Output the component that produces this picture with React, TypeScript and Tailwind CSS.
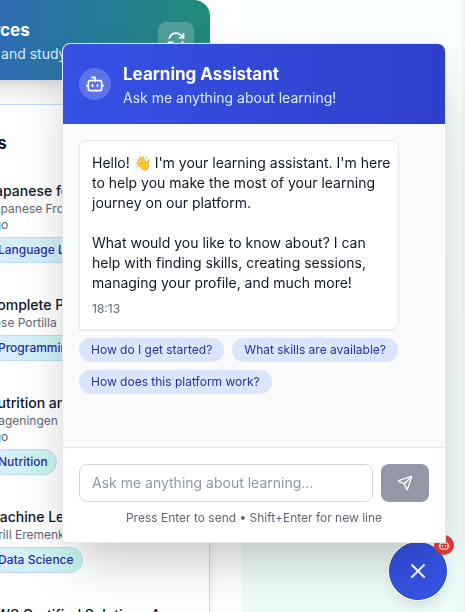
import { Bot, Send, X } from "lucide-react";
import { HiOutlineArrowPath } from "react-icons/hi2";

const courses = [
  { title: "Japanese for Beginners", by: ["Japanese From Zero", "ago"], tag: "Language Learning" },
  { title: "Complete Python", by: ["Jose Portilla"], tag: "Programming" },
  { title: "Nutrition and Health", by: ["Wageningen", "ago"], tag: "Nutrition" },
  { title: "Machine Learning", by: ["Kirill Eremenko"], tag: "Data Science" },
  { title: "AWS Certified Solutions Arc", by: [], tag: "" },
];

const prompts = ["How do I get started?", "What skills are available?", "How does this platform work?"];

function ResourcePage() {
  return (
    <div className="flex h-screen gap-8 overflow-hidden">
      <main className="-ml-24 w-[306px] shrink-0">
        <header className="flex h-20 items-center justify-between rounded-tr-2xl bg-linear-to-r/srgb from-[#325fd0] to-[#218c78] px-4 shadow-xl">
          <div className="pt-1 pl-[22px] whitespace-nowrap text-white">
            <h1 className="text-[17px] leading-6 font-bold">Resources</h1>
            <p className="text-sm leading-6 text-blue-100">Courses and study</p>
          </div>
          <button aria-label="Refresh" className="flex size-9 items-center justify-center rounded-lg bg-white/20 text-white">
            <HiOutlineArrowPath size={20} strokeWidth={2} />
          </button>
        </header>
        <section className="mt-6 h-[600px] rounded-tr-2xl border border-blue-200 bg-white pt-6 pl-[22px] shadow-lg">
          <h2 className="pl-2.5 text-[17px] leading-7 font-bold text-gray-900">Courses</h2>
          <ul className="mt-6 flex flex-col gap-8 pl-15 whitespace-nowrap">
            {courses.map((c) => (
              <li key={c.title}>
                <h3 className="text-sm leading-5 font-medium text-gray-900">{c.title}</h3>
                {c.by.map((line) => (
                  <p key={line} className="text-xs leading-4 text-[#5f6675]">{line}</p>
                ))}
                {c.tag && (
                  <span className="mt-1 ml-0.5 inline-block rounded-full border border-blue-200 bg-linear-to-r from-blue-100 to-[#c6f7ec] px-2 py-1 text-xs font-medium text-[#2a2fa3]">
                    {c.tag}
                  </span>
                )}
              </li>
            ))}
          </ul>
        </section>
      </main>
      <aside className="flex-1 border-r-3 border-slate-100 bg-linear-to-b from-[#fafffd] to-[#edfcf8]" />
    </div>
  );
}

function ChatPanel() {
  return (
    <section aria-label="Learning Assistant" className="fixed right-[19px] bottom-[69px] z-20 flex h-[500px] w-96 flex-col overflow-hidden rounded-t-lg border border-gray-200 bg-white shadow-2xl">
      <header className="flex h-20 shrink-0 items-center gap-3 bg-linear-to-r from-[#3552e5] to-[#2f3fcb] px-4 text-white">
        <div className="flex size-8 items-center justify-center rounded-full bg-white/20">
          <Bot size={20} />
        </div>
        <div>
          <h2 className="text-[17px] leading-7 font-bold">Learning Assistant</h2>
          <p className="text-sm leading-5 text-blue-100">Ask me anything about learning!</p>
        </div>
      </header>
      <div className="flex-1 bg-gray-50 p-4">
        <div className="w-80 rounded-lg rounded-bl-none border border-gray-200 bg-white py-3 pr-1 pl-3 shadow-xs">
          <p className="text-sm leading-5 text-gray-900">
            Hello! 👋 I'm your learning assistant. I'm here to help you make the most of your learning journey on our platform.
          </p>
          <p className="mt-5 text-sm leading-5 text-gray-900">
            What would you like to know about? I can help with finding skills, creating sessions, managing your profile, and much more!
          </p>
          <time className="mt-2 block text-xs leading-4 text-[#5f6675]">18:13</time>
        </div>
        <div className="mt-2 flex flex-wrap gap-2">
          {prompts.map((p) => (
            <button key={p} className="rounded-full bg-[#d9e6fd] px-3 py-1 text-xs leading-4 text-[#2a2fa3]">{p}</button>
          ))}
        </div>
      </div>
      <form className="border-t border-gray-200 p-4" onSubmit={(e) => e.preventDefault()}>
        <div className="flex gap-2">
          <input aria-label="Message" placeholder="Ask me anything about learning..." className="min-w-0 flex-1 rounded-lg border border-gray-300 px-3 py-2 text-sm leading-5 placeholder:text-[#9097a5]" />
          <button aria-label="Send message" className="flex w-12 items-center justify-center rounded-lg bg-[#9298a6] text-white">
            <Send size={16} />
          </button>
        </div>
        <p className="mt-2 text-center text-xs leading-4 text-[#5f6675]">Press Enter to send • Shift+Enter for new line</p>
      </form>
    </section>
  );
}

export default function App() {
  return (
    <div className="bg-white font-['Inter','Liberation_Sans',sans-serif]">
      <ResourcePage />
      <ChatPanel />
      <button aria-label="Close chat" className="fixed right-[18px] bottom-3 z-10 flex size-[58px] items-center justify-center rounded-full border border-[#2450b8] bg-[#3552e5] text-white shadow-lg ring-1 ring-white">
        <X size={24} />
        <span className="absolute -top-2 -right-2 flex size-5 items-center justify-center rounded-full bg-[#e23c3c]">
          <Bot size={12} />
        </span>
      </button>
    </div>
  );
}
